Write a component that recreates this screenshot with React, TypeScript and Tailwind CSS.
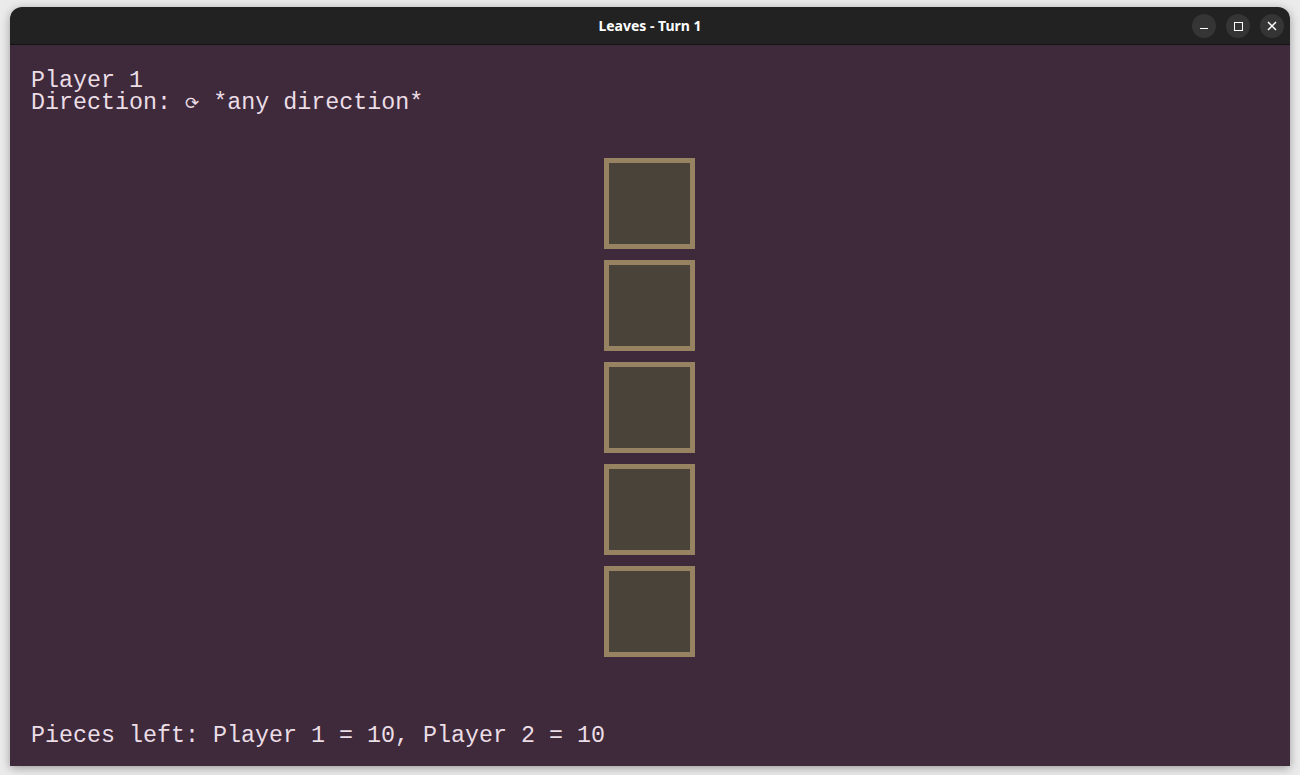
import React from "react";

const mono = { fontFamily: '"Liberation Mono", "DejaVu Sans Mono", monospace' };

function TitleButton({ children }: { children: React.ReactNode }) {
  return (
    <div className="w-6 h-6 rounded-full bg-[#353535] flex items-center justify-center text-white">
      {children}
    </div>
  );
}

function Square() {
  return <div className="w-[91px] h-[91px] border-[5px] border-[#978262] bg-[#4a433a]" />;
}

export default function App() {
  return (
    <div className="w-[1300px] h-[775px] bg-[#ebebeb] pt-[7px] pl-[10px] overflow-hidden">
      <div className="w-[1280px] h-[759px] flex flex-col rounded-t-[12px] overflow-hidden shadow-[0_2px_10px_rgba(0,0,0,0.35)]">
        {/* Title bar */}
        <div className="h-[38px] bg-[#222222] border-b border-[#141414] flex items-center relative">
          <div
            className="flex-1 text-center text-white text-[14px] font-bold"
            style={{ fontFamily: '"Noto Sans", "DejaVu Sans", sans-serif' }}
          >
            Leaves - Turn 1
          </div>
          <div className="absolute right-[6px] top-[7px] flex gap-[10px]">
            <TitleButton>
              <div className="w-[8px] h-[1.5px] bg-white mt-[5px]" />
            </TitleButton>
            <TitleButton>
              <div className="w-[9px] h-[9px] border-[1.5px] border-white" />
            </TitleButton>
            <TitleButton>
              <svg width="10" height="10" viewBox="0 0 10 10">
                <path d="M1 1 L9 9 M9 1 L1 9" stroke="white" strokeWidth="1.5" />
              </svg>
            </TitleButton>
          </div>
        </div>

        {/* Content */}
        <div
          className="flex-1 bg-[#3e2a3b] text-[#ebdde6] text-[23.33px] leading-[22px] flex flex-col px-[21px] pt-[25px] pb-[19px]"
          style={mono}
        >
          <div>
            <div>Player 1</div>
            <div>
              Direction: <span className="text-[17px]" style={{ fontFamily: '"DejaVu Sans", sans-serif' }}>⟳</span> *any direction*
            </div>
          </div>

          <div className="mt-[44px] flex flex-col items-center gap-[11px] -ml-[21px] -mr-[19px]">
            <Square />
            <Square />
            <Square />
            <Square />
            <Square />
          </div>

          <div className="mt-auto">Pieces left: Player 1 = 10, Player 2 = 10</div>
        </div>
      </div>
    </div>
  );
}
